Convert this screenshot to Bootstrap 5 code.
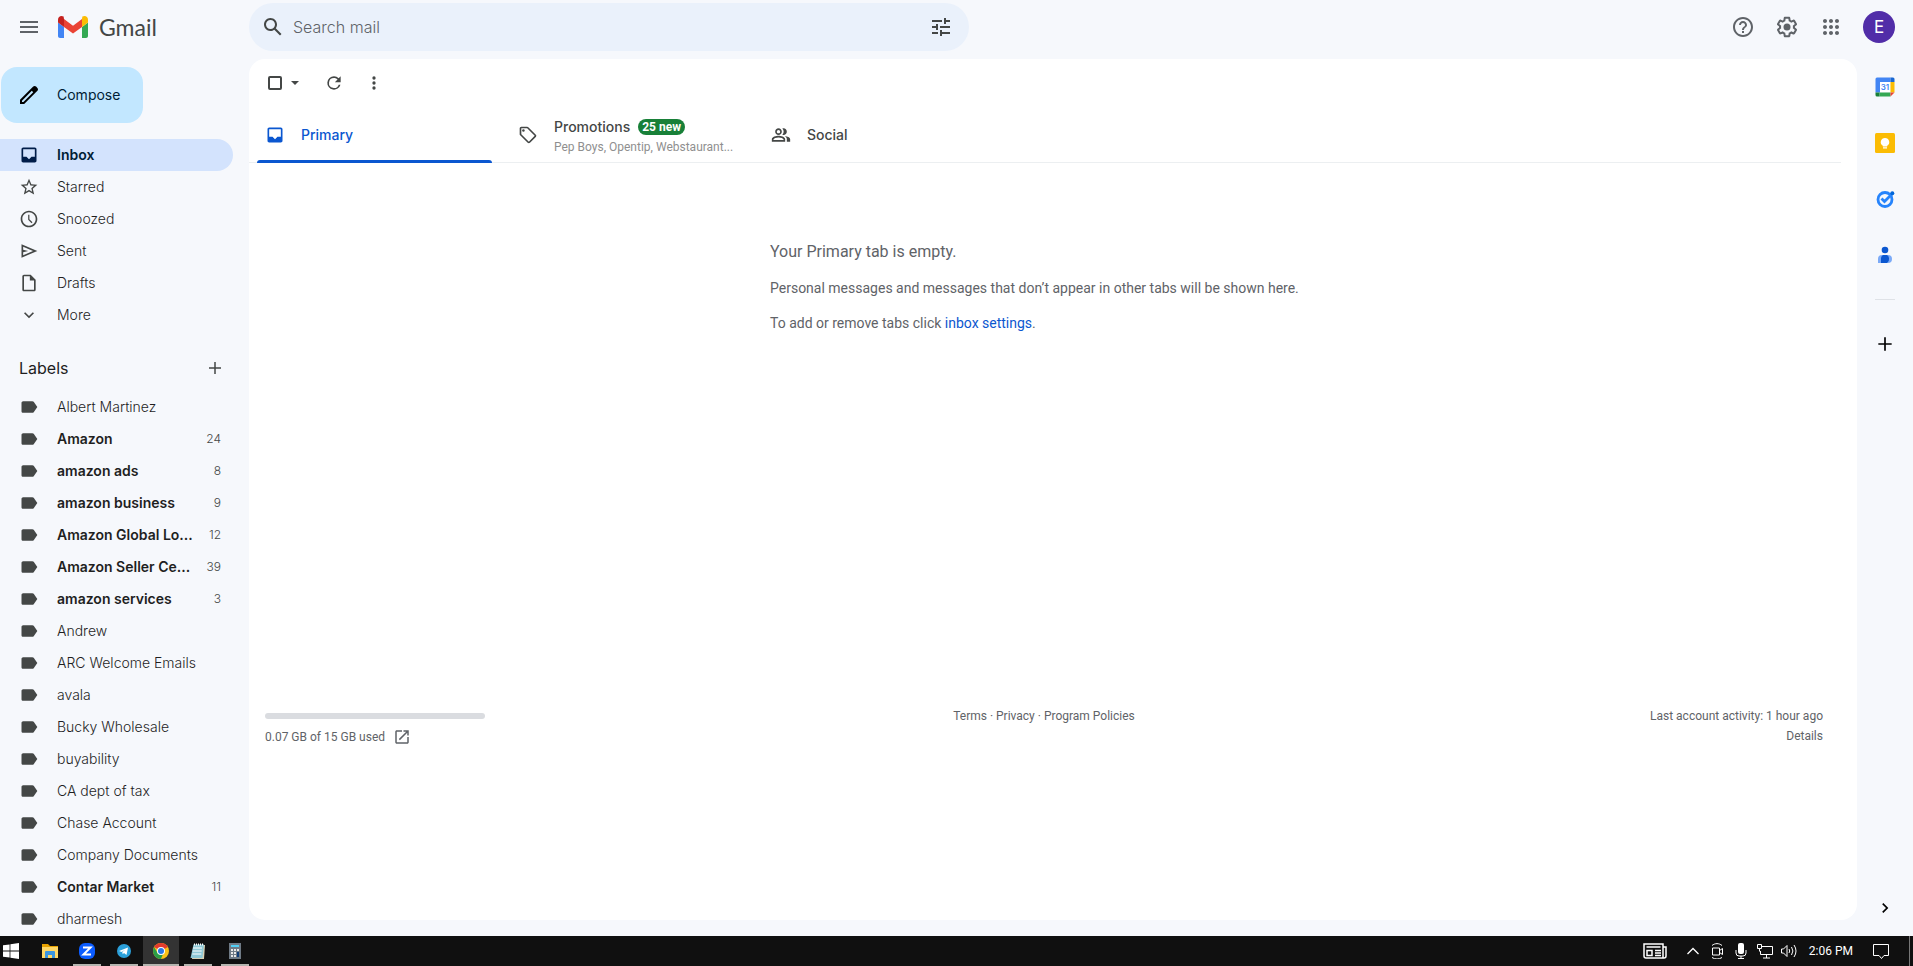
<!DOCTYPE html>
<html lang="en">
<head>
<meta charset="utf-8">
<meta name="viewport" content="width=device-width, initial-scale=1">
<title>Inbox - Gmail</title>
<link href="https://cdn.jsdelivr.net/npm/bootstrap@5.3.0/dist/css/bootstrap.min.css" rel="stylesheet">
<style>
:root { --side: 249px; --blue: #0b57d0; }
body { font-family: Inter, Roboto, "Liberation Sans", sans-serif; font-size: 14px; line-height: 20px; color: #444746; background: #f6f8fc; height: 100vh; overflow: hidden; }
svg { display: block; flex: none; fill: currentColor; }
a { color: inherit; text-decoration: none; }
.i16 { width: 16px; height: 16px; }
.i18 { width: 18px; height: 18px; }
.i20 { width: 20px; height: 20px; }
.i24 { width: 24px; height: 24px; }
.plain { background: none; border: 0; padding: 0; color: inherit; display: flex; align-items: center; justify-content: center; }

.topbar { height: 54px; }
.brand-area { width: var(--side); padding-left: 17px; color: #5f6368; }
.brand { gap: 10px; }
.wordmark { font-family: Lato, sans-serif; font-size: 23px; line-height: 32px; color: #444746; }
.search { width: 720px; height: 48px; border-radius: 24px; background: #eaf1fb; padding: 0 16px 0 12px; }
.search input { background: none; border: 0; outline: 0; font-size: 16px; font-weight: 300; line-height: 24px; padding: 0; color: #444746; }
.search input::placeholder { color: #5f6368; opacity: 1; }
.tools { color: #5f6368; padding-right: 18px; gap: 20px; }
.avatar { width: 32px; height: 32px; border-radius: 50%; background: #512da8; color: #fff; font-size: 17px; }

.sidebar { width: var(--side); overflow: hidden; padding-top: 13px; }
.compose { width: 142px; height: 56px; margin: 0 0 16px 1px; border-radius: 16px; background: #c2e7ff; color: #001d35; justify-content: flex-start; gap: 16px; padding-left: 16px; font-size: 14px; }
.compose svg { color: #000; }
.side-link { display: flex; align-items: center; width: 233px; height: 32px; flex: none; padding: 0 12px 0 19px; border-radius: 0 16px 16px 0; font-size: 14px; font-weight: 300; color: #1f1f1f; }
.side-link svg { color: #444746; }
.side-link .name { margin-left: 18px; width: 136px; }
.side-link .count { margin-left: auto; font-size: 12px; color: #444746; font-weight: 300; }
.side-link.current { background: #d3e3fd; color: #001d35; font-weight: 600; }
.side-link.current svg { color: #001d49; }
.side-link.unread { font-weight: 600; }
.labels-head { width: 233px; height: 34px; flex: none; margin: 20px 0 6px; padding: 0 9px 0 19px; color: #1f1f1f; font-size: 16px; }
.labels-head svg { color: #444746; }

.pane { background: #fff; border-radius: 16px; margin: 5px 0 16px; }
.actions { height: 48px; padding-left: 19px; }
.actions .lone { margin-left: 20px; }
.actions input { appearance: none; width: 14px; height: 14px; border: 2px solid #444746; border-radius: 2px; margin: 0; }
.tabs { height: 56px; margin-right: 16px; padding-left: 8px; border-bottom: 1px solid #eceff1; }
.tab { width: 253px; height: 56px; justify-content: flex-start; text-align: left; gap: 16px; padding-left: 8px; position: relative; font-size: 14px; font-weight: 500; }
.tab.active { color: var(--blue); }
.tab.active::after { content: ""; position: absolute; left: 0; right: 18px; bottom: 0; height: 3px; background: var(--blue); border-radius: 3px 3px 0 0; }
.pill-new { background: #188038; color: #fff; border-radius: 8px; font-family: Roboto, sans-serif; font-size: 12px; line-height: 16px; font-weight: 700; padding: 0 4px; }
.senders { font-family: Roboto, sans-serif; font-size: 12px; color: #8f8f8f; font-weight: 400; }
.empty { width: 550px; max-width: 100%; margin: 0 auto 373px; padding-top: 77px; color: #5f6368; font-family: Roboto, sans-serif; font-size: 14px; }
.empty h2 { font-size: 16px; line-height: 24px; font-weight: 400; margin-bottom: 14px; }
.empty p { line-height: 20px; margin-bottom: 15px; }
.empty a { color: var(--blue); }
.foot { margin: 0 34px 0 16px; font-family: Roboto, sans-serif; font-size: 12px; line-height: 20px; color: #5f6368; }
.foot > * { flex: 1 1 0; }
.foot .progress { width: 220px; height: 6px; border-radius: 3px; margin: 7px 0 8px; --bs-progress-bg: #dadce0; }

.rail { width: 56px; padding: 23px 0 18px; }
.rail .slot { height: 20px; margin-bottom: 36px; }
.rail hr { width: 20px; margin: -2px 0 34px; border-color: #9aa0a6; }

.taskbar { height: 30px; background: #101010; color: #fff; font-family: Roboto, sans-serif; font-size: 12px; flex: none; padding-right: 3px; }
.start { width: 32px; padding-right: 10px; }
.app { width: 36px; height: 30px; margin-right: 1px; position: relative; }
.app.open::after { content: ""; position: absolute; left: 4px; right: 4px; bottom: 0; height: 2px; background: #b5b5b0; }
.app.front { background: #333; }
.app.open.front::after { left: 0; right: 0; }
.tray { gap: 8px; }
.tray .news { margin-right: 10px; }
.tray .clock { margin: 0 12px 0 4px; }
.desk-edge { width: 1px; height: 30px; background: #777; margin-left: 12px; }
.thin { fill: none; stroke: currentColor; }
</style>
</head>
<body class="d-flex flex-column">

<svg width="0" height="0" class="position-absolute" aria-hidden="true">
  <symbol id="inbox" viewBox="0 0 24 24"><path d="M19 3H5c-1.100 0-2 .9-2 2v14c0 1.100.9 2 2 2h14c1.100 0 2-.9 2-2V5c0-1.100-.9-2-2-2zm0 11h-4l-3 3-3-3H5V5h14v9z"/></symbol>
  <symbol id="label" viewBox="0 0 24 24"><path d="M17.630 5.840C17.270 5.330 16.670 5 16 5L5 5.010C3.900 5.010 3 5.900 3 7v10c0 1.100.9 1.990 2 1.990L16 19c.67 0 1.270-.33 1.630-.84L22 12l-4.370-6.160z"/></symbol>
  <symbol id="plus" viewBox="0 0 24 24"><path d="M20 13h-7v7h-2v-7H4v-2h7V4h2v7h7z"/></symbol>
</svg>

<header class="topbar d-flex align-items-center flex-shrink-0">
  <div class="brand-area d-flex align-items-center">
    <button class="plain" aria-label="Main menu"><svg class="i24" viewBox="0 0 24 24"><path d="M3 18h18v-2H3v2zm0-5h18v-2H3v2zm0-7v2h18V6H3z"/></svg></button>
    <a href="#" class="brand d-flex align-items-center ms-3" aria-label="Gmail">
      <svg width="32" height="24" viewBox="0 0 32 24"><path fill="#4285f4" d="M3 23h4V12L1 7.500V21c0 1.100.9 2 2 2z"/><path fill="#34a853" d="M25 23h4c1.100 0 2-.9 2-2V7.500L25 12z"/><path fill="#fbbc04" d="M25 4v8l6-4.500V4.500C31 1.500 27.700-.1 25.400 1.600z"/><path fill="#ea4335" d="M7 12V4l9 6.800L25 4v8l-9 6.500z"/><path fill="#c5221f" d="M1 4.500v3L7 12V4L6.600 1.600C4.300-.1 1 1.500 1 4.500z"/></svg>
      <span class="wordmark">Gmail</span>
    </a>
  </div>
  <form class="search d-flex align-items-center">
    <button type="button" class="plain" aria-label="Search"><svg class="i24" viewBox="0 0 24 24"><path d="M20.490 19l-5.730-5.730C15.530 12.200 16 10.910 16 9.500 16 5.910 13.090 3 9.500 3S3 5.910 3 9.500 5.910 16 9.500 16c1.410 0 2.700-.47 3.770-1.240L19 20.490 20.490 19zM5 9.500C5 7.010 7.010 5 9.500 5S14 7.010 14 9.500 11.990 14 9.500 14 5 11.990 5 9.500z"/></svg></button>
    <input type="text" class="flex-grow-1 ms-2" placeholder="Search mail" aria-label="Search mail">
    <button type="button" class="plain" aria-label="Show search options"><svg class="i24" viewBox="0 0 24 24"><path d="M3 17v2h6v-2H3zM3 5v2h10V5H3zm10 16v-2h8v-2h-8v-2h-2v6h2zM7 9v2H3v2h4v2h2V9H7zm14 4v-2H11v2h10zm-6-4h2V7h4V5h-4V3h-2v6z"/></svg></button>
  </form>
  <div class="tools d-flex align-items-center ms-auto">
    <button class="plain" aria-label="Support"><svg class="i24" viewBox="0 0 24 24"><path d="M11 18h2v-2h-2v2zm1-16C6.480 2 2 6.480 2 12s4.480 10 10 10 10-4.480 10-10S17.520 2 12 2zm0 18c-4.410 0-8-3.590-8-8s3.590-8 8-8 8 3.590 8 8-3.590 8-8 8zm0-14c-2.210 0-4 1.790-4 4h2c0-1.100.9-2 2-2s2 .9 2 2c0 2-3 1.750-3 5h2c0-2.250 3-2.500 3-5 0-2.210-1.790-4-4-4z"/></svg></button>
    <button class="plain" aria-label="Settings"><svg class="i24" viewBox="0 0 24 24"><path d="M13.850 22.250h-3.700c-.74 0-1.360-.54-1.450-1.270l-.27-1.890c-.27-.14-.53-.29-.79-.46l-1.800.72c-.7.26-1.470-.03-1.810-.65L2.200 15.530c-.35-.66-.2-1.440.36-1.880l1.530-1.190c-.01-.15-.02-.3-.02-.46 0-.15.01-.31.02-.46l-1.520-1.190c-.59-.45-.74-1.260-.37-1.880l1.850-3.190c.34-.62 1.110-.9 1.790-.63l1.810.73c.26-.17.520-.32.78-.46l.27-1.910c.09-.7.710-1.250 1.440-1.250h3.700c.74 0 1.360.54 1.450 1.270l.27 1.890c.27.14.53.29.79.46l1.800-.72c.71-.26 1.480.03 1.820.65l1.840 3.180c.36.66.2 1.440-.36 1.880l-1.520 1.190c.01.15.02.3.02.46s-.01.31-.02.46l1.520 1.190c.56.45.72 1.230.37 1.860l-1.860 3.220c-.34.62-1.110.9-1.800.63l-1.800-.72c-.26.17-.52.32-.78.46l-.27 1.910c-.1.680-.72 1.220-1.460 1.220zm-3.230-2h2.760l.37-2.550.53-.22c.44-.18.880-.44 1.340-.78l.45-.34 2.380.96 1.380-2.400-2.030-1.580.07-.56c.03-.26.060-.51.060-.78s-.03-.53-.06-.78l-.07-.56 2.030-1.580-1.390-2.400-2.390.96-.45-.35c-.42-.32-.87-.58-1.330-.77l-.52-.22-.37-2.550h-2.760l-.37 2.550-.53.21c-.44.19-.88.44-1.340.79l-.45.33-2.380-.95-1.390 2.390 2.030 1.580-.07.56a7 7 0 0 0-.06.79c0 .26.020.53.060.78l.07.56-2.030 1.580 1.380 2.400 2.390-.96.45.35c.43.33.86.58 1.330.77l.53.22.38 2.550z"/><circle cx="12" cy="12" r="3.500"/></svg></button>
    <button class="plain" aria-label="Google apps"><svg class="i24" viewBox="0 0 24 24"><path d="M6 8c1.100 0 2-.9 2-2s-.9-2-2-2-2 .9-2 2 .9 2 2 2zm6 12c1.100 0 2-.9 2-2s-.9-2-2-2-2 .9-2 2 .9 2 2 2zm-6 0c1.100 0 2-.9 2-2s-.9-2-2-2-2 .9-2 2 .9 2 2 2zm0-6c1.100 0 2-.9 2-2s-.9-2-2-2-2 .9-2 2 .9 2 2 2zm6 0c1.100 0 2-.9 2-2s-.9-2-2-2-2 .9-2 2 .9 2 2 2zm4-8c0 1.100.9 2 2 2s2-.9 2-2-.9-2-2-2-2 .9-2 2zm-4 2c1.100 0 2-.9 2-2s-.9-2-2-2-2 .9-2 2 .9 2 2 2zm6 6c1.100 0 2-.9 2-2s-.9-2-2-2-2 .9-2 2 .9 2 2 2zm0 6c1.100 0 2-.9 2-2s-.9-2-2-2-2 .9-2 2 .9 2 2 2z"/></svg></button>
    <button class="plain avatar" aria-label="Google Account">E</button>
  </div>
</header>

<div class="d-flex flex-grow-1 overflow-hidden">
  <nav class="sidebar d-flex flex-column flex-shrink-0" aria-label="Mailboxes">
    <button class="plain compose flex-shrink-0"><svg class="i24" viewBox="0 0 24 24"><path d="M20.410 4.940l-1.350-1.350c-.78-.78-2.050-.78-2.830 0L3 16.820V21h4.180L20.410 7.770c.79-.78.790-2.050 0-2.830zm-14 14.120L5 19v-1.360l9.820-9.820 1.410 1.410-9.820 9.830z"/></svg><span>Compose</span></button>
    <a href="#" class="side-link current"><svg class="i20"><use href="#inbox"/></svg><span class="name">Inbox</span></a>
    <a href="#" class="side-link"><svg class="i20" viewBox="0 0 24 24"><path d="M22 9.240l-7.190-.62L12 2 9.190 8.630 2 9.240l5.460 4.730L5.820 21 12 17.270 18.180 21l-1.630-7.030L22 9.240zM12 15.400l-3.760 2.270 1-4.280-3.320-2.880 4.380-.38L12 6.100l1.710 4.040 4.380.38-3.320 2.880 1 4.280L12 15.400z"/></svg><span class="name">Starred</span></a>
    <a href="#" class="side-link"><svg class="i20" viewBox="0 0 24 24"><path d="M11.990 2C6.470 2 2 6.480 2 12s4.470 10 9.990 10C17.520 22 22 17.520 22 12S17.520 2 11.990 2zM12 20c-4.420 0-8-3.580-8-8s3.580-8 8-8 8 3.580 8 8-3.580 8-8 8zM12.500 7H11v6l4 4 1.200-1.200-3.700-3.600z"/></svg><span class="name">Snoozed</span></a>
    <a href="#" class="side-link"><svg class="i20" viewBox="0 0 24 24"><path d="M3 20V4l19 8-19 8zm2-3l11.850-5L5 7v3.500l6 1.500-6 1.500V17z"/></svg><span class="name">Sent</span></a>
    <a href="#" class="side-link"><svg class="i20" viewBox="0 0 24 24"><path d="M14 2H6c-1.100 0-2 .9-2 2v16c0 1.100.9 2 2 2h12c1.100 0 2-.9 2-2V8l-6-6zM6 20V4h7v5h5v11H6z"/></svg><span class="name">Drafts</span></a>
    <a href="#" class="side-link"><svg class="i20" viewBox="0 0 24 24"><path d="M7.410 8.590L12 13.170l4.590-4.580L18 10l-6 6-6-6z"/></svg><span class="name">More</span></a>
    <div class="labels-head d-flex align-items-center justify-content-between"><span>Labels</span><button class="plain" aria-label="Create new label"><svg class="i18"><use href="#plus"/></svg></button></div>
    <a href="#" class="side-link"><svg class="i20"><use href="#label"/></svg><span class="name text-truncate">Albert Martinez</span></a>
    <a href="#" class="side-link unread"><svg class="i20"><use href="#label"/></svg><span class="name text-truncate">Amazon</span><span class="count">24</span></a>
    <a href="#" class="side-link unread"><svg class="i20"><use href="#label"/></svg><span class="name text-truncate">amazon ads</span><span class="count">8</span></a>
    <a href="#" class="side-link unread"><svg class="i20"><use href="#label"/></svg><span class="name text-truncate">amazon business</span><span class="count">9</span></a>
    <a href="#" class="side-link unread"><svg class="i20"><use href="#label"/></svg><span class="name text-nowrap">Amazon Global Lo...</span><span class="count">12</span></a>
    <a href="#" class="side-link unread"><svg class="i20"><use href="#label"/></svg><span class="name text-nowrap">Amazon Seller Ce...</span><span class="count">39</span></a>
    <a href="#" class="side-link unread"><svg class="i20"><use href="#label"/></svg><span class="name text-truncate">amazon services</span><span class="count">3</span></a>
    <a href="#" class="side-link"><svg class="i20"><use href="#label"/></svg><span class="name text-truncate">Andrew</span></a>
    <a href="#" class="side-link"><svg class="i20"><use href="#label"/></svg><span class="name text-nowrap">ARC Welcome Emails</span></a>
    <a href="#" class="side-link"><svg class="i20"><use href="#label"/></svg><span class="name text-truncate">avala</span></a>
    <a href="#" class="side-link"><svg class="i20"><use href="#label"/></svg><span class="name text-truncate">Bucky Wholesale</span></a>
    <a href="#" class="side-link"><svg class="i20"><use href="#label"/></svg><span class="name text-truncate">buyability</span></a>
    <a href="#" class="side-link"><svg class="i20"><use href="#label"/></svg><span class="name text-truncate">CA dept of tax</span></a>
    <a href="#" class="side-link"><svg class="i20"><use href="#label"/></svg><span class="name text-truncate">Chase Account</span></a>
    <a href="#" class="side-link"><svg class="i20"><use href="#label"/></svg><span class="name text-nowrap">Company Documents</span></a>
    <a href="#" class="side-link unread"><svg class="i20"><use href="#label"/></svg><span class="name text-truncate">Contar Market</span><span class="count">11</span></a>
    <a href="#" class="side-link"><svg class="i20"><use href="#label"/></svg><span class="name text-truncate">dharmesh</span></a>
  </nav>

  <main class="pane flex-grow-1 overflow-hidden">
    <div class="actions d-flex align-items-center">
      <input type="checkbox" aria-label="Select">
      <button class="plain ms-1" aria-label="Select options"><svg class="i18" viewBox="0 0 18 18"><path d="M5 7l4 4 4-4z"/></svg></button>
      <button class="plain lone" aria-label="Refresh"><svg class="i20" viewBox="0 0 24 24"><path d="M17.650 6.350A7.960 7.960 0 0 0 12 4a8 8 0 1 0 7.730 10h-2.080A6 6 0 1 1 12 6c1.660 0 3.140.69 4.220 1.780L13 11h7V4z"/></svg></button>
      <button class="plain lone" aria-label="More"><svg class="i20" viewBox="0 0 24 24"><circle cx="12" cy="6" r="2"/><circle cx="12" cy="12" r="2"/><circle cx="12" cy="18" r="2"/></svg></button>
    </div>
    <div class="tabs d-flex" role="tablist">
      <button class="plain tab active" role="tab" aria-selected="true"><svg class="i20"><use href="#inbox"/></svg><span>Primary</span></button>
      <button class="plain tab" role="tab"><svg class="i20" viewBox="0 0 24 24"><path d="M21.400 11.600l-9-9C12 2.200 11.500 2 11 2H4c-1.100 0-2 .9-2 2v7c0 .6.200 1.100.6 1.400l9 9c.4.4.9.600 1.400.600s1-.2 1.400-.6l7-7c.4-.4.600-.9.600-1.400s-.2-1-.6-1.400zM13 20l-9-9V4h7l9 9-7 7z"/><circle cx="6.500" cy="6.500" r="1.500"/></svg><span class="pt-1"><span class="d-flex align-items-center gap-2">Promotions <span class="pill-new">25 new</span></span><span class="senders d-block text-nowrap">Pep Boys, Opentip, Webstaurant...</span></span></button>
      <button class="plain tab" role="tab"><svg class="i20" viewBox="0 0 24 24"><path d="M15 12c2.210 0 4-1.790 4-4s-1.790-4-4-4c-.47 0-.91.1-1.330.24a5.980 5.980 0 0 1 0 7.520c.42.14.86.24 1.330.24zM9 12c2.210 0 4-1.790 4-4s-1.790-4-4-4-4 1.790-4 4 1.790 4 4 4zm0-6c1.100 0 2 .9 2 2s-.9 2-2 2-2-.9-2-2 .9-2 2-2zM9 13c-2.670 0-8 1.340-8 4v3h16v-3c0-2.660-5.330-4-8-4zm6 5H3v-.99C3.200 16.290 6.300 15 9 15s5.800 1.290 6 2v1zM16.670 13.130C18.040 14.060 19 15.320 19 17v3h4v-3c0-2.180-3.570-3.470-6.330-3.870z"/></svg><span>Social</span></button>
    </div>
    <div class="pe-3">
      <section class="empty">
        <h2>Your Primary tab is empty.</h2>
        <p>Personal messages and messages that don’t appear in other tabs will be shown here.</p>
        <p class="mb-0">To add or remove tabs click <a href="#">inbox settings</a>.</p>
      </section>
    </div>
    <footer class="foot d-flex">
      <div>
        <div class="progress" role="progressbar" aria-label="Storage used" aria-valuenow="0" aria-valuemin="0" aria-valuemax="100"></div>
        <div class="d-flex align-items-center gap-2"><span>0.07 GB of 15 GB used</span><a href="#" aria-label="Manage storage"><svg class="i18" viewBox="0 0 24 24"><path d="M19 19H5V5h7V3H5c-1.110 0-2 .9-2 2v14c0 1.100.89 2 2 2h14c1.100 0 2-.9 2-2v-7h-2v7zM14 3v2h3.590l-9.830 9.830 1.410 1.410L19 6.410V10h2V3h-7z"/></svg></a></div>
      </div>
      <div class="text-center"><a href="#">Terms</a> · <a href="#">Privacy</a> · <a href="#">Program Policies</a></div>
      <div class="text-end">Last account activity: 1 hour ago<br><a href="#">Details</a></div>
    </footer>
  </main>

  <aside class="rail d-flex flex-column align-items-center flex-shrink-0" aria-label="Side panel">
    <a href="#" class="slot" aria-label="Calendar"><svg class="i20" viewBox="0 0 20 20"><path fill="#fff" d="M5 5h10v10H5z"/><path fill="#4285f4" d="M2 .5h13.500V5H5v10.500H.5V2A1.500 1.500 0 0 1 2 .5z"/><path fill="#1967d2" d="M15.500.5H18A1.500 1.500 0 0 1 19.500 2v3h-4z"/><path fill="#fbbc04" d="M15.500 5h4v10.500h-4z"/><path fill="#34a853" d="M4.500 15.500h11v4h-11z"/><path fill="#188038" d="M.5 15.500h4v4H2A1.500 1.500 0 0 1 .5 18z"/><path fill="#ea4335" d="M15.500 15.500h4l-4 4z"/><text x="10" y="13" font-size="8" font-weight="600" text-anchor="middle" fill="#4285f4">31</text></svg></a>
    <a href="#" class="slot" aria-label="Keep"><svg class="i20" viewBox="0 0 20 20"><rect width="20" height="20" rx="1.500" fill="#fbbc04"/><path fill="#fff" d="M10 5a4.200 4.200 0 0 0-2.200 7.800V13.500h4.400v-.7A4.200 4.200 0 0 0 10 5zM8 14.300h4v1.200H8z"/></svg></a>
    <a href="#" class="slot" aria-label="Tasks"><svg class="i20" viewBox="0 0 20 20"><circle cx="10" cy="10.500" r="7" fill="none" stroke="#2684fc" stroke-width="2.800"/><path fill="none" stroke="#2684fc" stroke-width="2.800" d="M6.500 9.500l3 3L17.500 4.500"/><circle cx="17.300" cy="4.300" r="2" fill="#0066da"/></svg></a>
    <a href="#" class="slot" aria-label="Contacts"><svg class="i20" viewBox="0 0 20 20"><circle cx="10" cy="5" r="3.300" fill="#0b57d0"/><path fill="#7baaf7" d="M3 18v-4a4 4 0 0 1 4-4h6a4 4 0 0 1 4 4 4 4 0 0 1-4 4z"/><path fill="#0b57d0" d="M6 18v-5a4 4 0 0 1 2-3h4a4 4 0 0 1 2 3v1a4 4 0 0 1-2 4z"/></svg></a>
    <hr>
    <button class="plain text-black" aria-label="Get add-ons"><svg class="i20"><use href="#plus"/></svg></button>
    <button class="plain mt-auto text-black" aria-label="Hide side panel"><svg class="i20" viewBox="0 0 24 24"><path d="M8.600 16.600L13.200 12 8.600 7.400 10 6l6 6-6 6z"/></svg></button>
  </aside>
</div>

<footer class="taskbar d-flex align-items-center">
  <button class="plain start" aria-label="Start"><svg class="i16" viewBox="0 0 16 16"><path d="M0 2.300l6.600-.9v6.200H0zM7.400 1.300L16 0v7.600H7.400zM0 8.400h6.600v6.200L0 13.700zM7.400 8.400H16V16l-8.600-1.200z"/></svg></button>
  <button class="plain app" aria-label="File Explorer"><svg class="i16" viewBox="0 0 16 16"><path fill="#e8a200" d="M0 1h6l2 2h8v4H0z"/><path fill="#ffd867" d="M0 4h16v11H0z"/><path fill="#3b96e0" d="M3 15V9a1 1 0 0 1 1-1h8a1 1 0 0 1 1 1v6h-3v-3H6v3z"/></svg></button>
  <button class="plain app open" aria-label="Zoom"><svg class="i16" viewBox="0 0 16 16"><rect width="16" height="16" rx="6" fill="#0b5cff"/><path class="thin" stroke="#fff" stroke-width="2" d="M4 4.500h7.500L4.500 11.500H12"/></svg></button>
  <button class="plain app open" aria-label="Telegram"><svg class="i16" viewBox="0 0 16 16"><circle cx="8" cy="8" r="7" fill="#2ba0da"/><path fill="#fff" d="M3 8l9-3.500-1.500 7.500-2.500-2-1.300 1.300-.4-2.300L9.500 6.500 5.500 9z"/></svg></button>
  <button class="plain app open front" aria-label="Chrome"><svg class="i16" viewBox="0 0 16 16"><circle cx="8" cy="8" r="8" fill="#fbc116"/><path fill="#e33b2e" d="M8 8L1.100 4A8 8 0 0 1 14.900 4z"/><path fill="#2a9d48" d="M8 16A8 8 0 0 1 1.100 4L4.600 10 8 12l2-1z"/><circle cx="8" cy="8" r="4" fill="#fff"/><circle cx="8" cy="8" r="3" fill="#2b78e4"/></svg></button>
  <button class="plain app open" aria-label="Notepad"><svg class="i16" viewBox="0 0 16 16"><path fill="#d9d1b4" d="M4 2h11l-1 14H2z"/><path fill="#8fc9d6" d="M3.500 1.500h10.500L12.500 15H.5z"/><path class="thin" stroke="#b9dfe6" d="M3 5h9M2.700 8h9M2.300 11h9"/><path class="thin" stroke="#d8d8d8" stroke-dasharray="1 1" stroke-width="2" d="M4 1.500h10"/></svg></button>
  <button class="plain app open" aria-label="Calculator"><svg class="i16" viewBox="0 0 16 16"><path fill="#6f7a85" d="M2 0h12v16H2z"/><path fill="#50d0f5" d="M4 2h8v2H4z"/><path fill="#e8e8e8" d="M4 6h2v2H4zM7 6h2v2H7zM10 6h2v2h-2zM4 9h2v2H4zM7 9h2v2H7zM4 12h2v2H4zM7 12h2v2H7z"/><path fill="#123e78" d="M10 9h2v5h-2z"/></svg></button>

  <div class="tray d-flex align-items-center ms-auto">
    <button class="plain news" aria-label="News"><svg width="24" height="16" viewBox="0 0 24 16"><path class="thin" stroke-width="1.500" d="M1 1h19v14H3a2 2 0 0 1-2-2zM20 4h3v9a2 2 0 0 1-2 2H4M3.500 4h14M12 7.500h6M12 10h6M12 12.500h6"/><path class="thin" stroke-width="1.500" d="M4 7.500h5v5H4z"/></svg></button>
    <button class="plain" aria-label="Show hidden icons"><svg class="i16" viewBox="0 0 16 16"><path class="thin" stroke-width="1.300" d="M2.500 11L8 5.500l5.500 5.500"/></svg></button>
    <button class="plain" aria-label="Meet now"><svg class="i16" viewBox="0 0 16 16"><path class="thin" d="M3.500 5h7v7h-7zM10.500 7.500l3-2v6l-3-2M3 2.500C6 0 10 0 13 2.500M3 14.500c3 2 7 2 10 0"/></svg></button>
    <button class="plain" aria-label="Microphone"><svg class="i16" viewBox="0 0 16 16"><rect x="5" width="6" height="11" rx="2"/><path class="thin" d="M3 7v3a3 3 0 0 0 3 3h4a3 3 0 0 0 3-3V7M8 13v2.500M5 15.500h6"/></svg></button>
    <button class="plain" aria-label="Network"><svg class="i16" viewBox="0 0 16 16"><path class="thin" d="M5 3.500h10.500v8H3.500V8M9.500 12v3M6 15h7M.5 1.500h4v4h-4zM2.500 5.500v3"/></svg></button>
    <button class="plain" aria-label="Volume"><svg class="i16" viewBox="0 0 16 16"><path class="thin" d="M.5 6h2L6 2.500v11L2.500 10h-2zM8 6q1.500 2 0 4M10.500 4q2.800 4 0 8M13 2q4 6 0 12"/></svg></button>
    <span class="clock text-nowrap">2:06 PM</span>
    <button class="plain" aria-label="Notifications"><svg class="i16" viewBox="0 0 16 16"><path class="thin" d="M.5 1.500h15v11H11l-2.500 3-2.500-3H.5z"/></svg></button>
    <div class="desk-edge"></div>
  </div>
</footer>

<script src="https://cdn.jsdelivr.net/npm/bootstrap@5.3.0/dist/js/bootstrap.bundle.min.js"></script>
</body>
</html>
